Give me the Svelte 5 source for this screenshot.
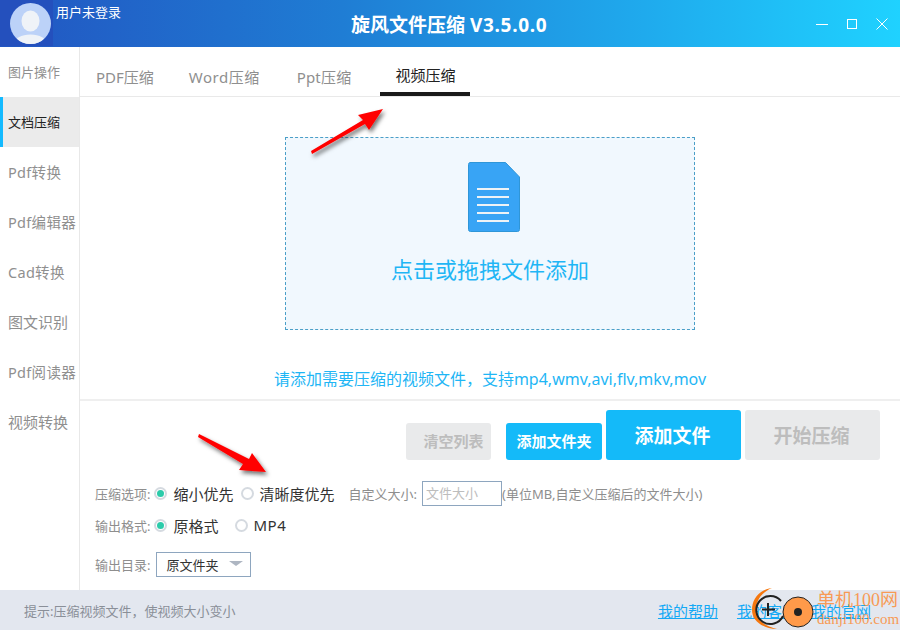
<script lang="ts">
    const navItems = [
        { label: "图片操作", size: "s" },
        { label: "文档压缩", size: "s" },
        { label: "Pdf转换", size: "m" },
        { label: "Pdf编辑器", size: "m" },
        { label: "Cad转换", size: "m" },
        { label: "图文识别", size: "l" },
        { label: "Pdf阅读器", size: "m" },
        { label: "视频转换", size: "l" },
    ];
    const tabs = ["PDF压缩", "Word压缩", "Ppt压缩", "视频压缩"];
    let activeNav = $state("文档压缩");
    let activeTab = $state("视频压缩");
    let quality = $state("small");
    let format = $state("origin");
</script>

<div class="window">
    <header class="titlebar">
        <div class="user">
            <div class="avatar-box">
                <svg class="avatar" viewBox="0 0 41 41" width="41" height="41">
                    <defs><clipPath id="round"><circle cx="20.5" cy="20.5" r="20.5" /></clipPath></defs>
                    <g clip-path="url(#round)">
                        <rect width="41" height="41" fill="#bcd2f8" />
                        <ellipse cx="20.5" cy="18" rx="9" ry="10.5" fill="#eff3f8" />
                        <ellipse cx="20.5" cy="41" rx="16.5" ry="9.5" fill="#eff3f8" />
                    </g>
                </svg>
            </div>
            <span class="user-name">用户未登录</span>
        </div>
        <h1 class="app-title">旋风文件压缩 <span class="version">V3.5.0.0</span></h1>
        <div class="win-controls">
            <svg width="12" height="12" viewBox="0 0 12 12"><path d="M0 6.5h12" stroke="#fff" stroke-width="1" /></svg>
            <svg width="12" height="12" viewBox="0 0 12 12"><rect x="1.5" y="1.500" width="9" height="9" fill="none" stroke="#fff" /></svg>
            <svg width="12" height="12" viewBox="0 0 12 12"><path d="M.5.5l11 11M11.5.5l-11 11" stroke="#fff" stroke-width="1" /></svg>
        </div>
    </header>

    <div class="body">
        <nav class="sidebar">
            {#each navItems as item}
                <button class="nav-item {item.size}" class:active={activeNav === item.label} onclick={() => (activeNav = item.label)}>{item.label}</button>
            {/each}
        </nav>

        <main class="content">
            <div class="tabs">
                {#each tabs as tab}
                    <button class="tab" class:active={activeTab === tab} onclick={() => (activeTab = tab)}>{tab}</button>
                {/each}
            </div>

            <section class="drop-area">
                <div class="drop-zone">
                    <svg class="doc-icon" width="52" height="70" viewBox="0 0 52 70">
                        <path d="M2 .5h35.500L51.500 15V67.500a2 2 0 0 1-2 2H2.500a2 2 0 0 1-2-2V2.500a2 2 0 0 1 1.500-2z" fill="#38a4f5" stroke="#2f96d8" />
                        <path d="M9 27h32M9 35h32M9 43h32M9 51h32M9 59h32" stroke="#eef3f6" stroke-width="2" />
                    </svg>
                    <p class="drop-text">点击或拖拽文件添加</p>
                </div>
                <p class="hint">请添加需要压缩的视频文件，支持mp4,wmv,avi,flv,mkv,mov</p>
            </section>

            <section class="panel">
                <div class="actions">
                    <button class="btn small disabled">清空列表</button>
                    <button class="btn small primary">添加文件夹</button>
                    <button class="btn large primary">添加文件</button>
                    <button class="btn large disabled">开始压缩</button>
                </div>

                <div class="option-row first">
                    <span class="label">压缩选项:</span>
                    <button class="radio" class:checked={quality === "small"} onclick={() => (quality = "small")}><i></i>缩小优先</button>
                    <button class="radio" class:checked={quality === "clear"} onclick={() => (quality = "clear")}><i></i>清晰度优先</button>
                    <span class="label custom">自定义大小:</span>
                    <input class="size-input" placeholder="文件大小" />
                    <span class="label">(单位MB,自定义压缩后的文件大小)</span>
                </div>
                <div class="option-row second">
                    <span class="label">输出格式:</span>
                    <button class="radio" class:checked={format === "origin"} onclick={() => (format = "origin")}><i></i>原格式</button>
                    <button class="radio mp4" class:checked={format === "mp4"} onclick={() => (format = "mp4")}><i></i>MP4</button>
                </div>
                <div class="option-row third">
                    <span class="label">输出目录:</span>
                    <div class="select">原文件夹<b></b></div>
                </div>
            </section>
        </main>
    </div>

    <footer class="statusbar">
        <span class="tip">提示:压缩视频文件，使视频大小变小</span>
        <div class="links">
            <a href="#help">我的帮助</a>
            <a href="#service">我的客服</a>
            <a href="#site">我的官网</a>
        </div>
    </footer>

    <!-- annotations lying over the screenshot -->
    <svg class="arrows" width="900" height="630" viewBox="0 0 900 630">
        <defs>
            <filter id="shade" x="-30%" y="-30%" width="170%" height="170%">
                <feDropShadow dx="2" dy="3" stdDeviation="2" flood-color="#000" flood-opacity="0.55" />
            </filter>
        </defs>
        <path d="M311 151l52-31-5-5 25-6-14 21-4-6-53 30z" fill="#f00" filter="url(#shade)" />
        <path d="M199 434l50 25 3-6 14 19-27-2 4-6-45-27z" fill="#f00" filter="url(#shade)" />
    </svg>

    <!-- site watermark -->
    <div class="watermark">
        <svg width="72" height="44" viewBox="0 0 72 44">
            <path d="M22 0C8 2 2 12 2 22c0 10 10 19 25 19C15 38 6 32 6 22 6 12 12 4 22 0z" fill="#f5770f" />
            <path d="M31 13A14 14 0 1 0 33 28" fill="none" stroke="#222" stroke-width="2" />
            <path d="M18 15v13M12 21.500h13" stroke="#222" stroke-width="2" />
            <circle cx="48" cy="24" r="15" fill="#ff9a4a" stroke="#222" stroke-width="1" />
            <circle cx="48" cy="24" r="4" fill="#222" />
        </svg>
        <div class="wm-text">
            <span class="wm-cn">单机100网</span>
            <span class="wm-en">danji100.com</span>
        </div>
    </div>
</div>

<style>
    :global(body) {
        margin: 0;
        background: #fff;
    }

    .window {
        position: relative;
        width: 900px;
        height: 630px;
        display: flex;
        flex-direction: column;
        overflow: hidden;
        font-family: "Noto Sans", "Noto Sans CJK SC", sans-serif;
        color: #333;
    }

    button {
        font-family: inherit;
        background: none;
        border: none;
        padding: 0;
        cursor: pointer;
    }

    .titlebar {
        height: 47px;
        flex: none;
        display: flex;
        align-items: center;
        background: linear-gradient(90deg, #2256c2 0%, #1f7dd4 38%, #1fa8ec 70%, #1fd2ff 100%);
    }

    .user {
        width: 190px;
        height: 47px;
        display: flex;
        flex: none;
    }

    .avatar-box {
        width: 53px;
        height: 46px;
        flex: none;
        background: #2450bd;
        padding: 3px 0 0 10px;
        box-sizing: border-box;
    }

    .user-name {
        margin: 3px 0 0 3px;
        font-size: 13px;
        line-height: 18px;
        color: #fff;
    }

    .app-title {
        margin: 0;
        flex: 1;
        padding-left: 161px;
        font-size: 19px;
        font-weight: 700;
        color: #fff;
    }

    .version {
        letter-spacing: 0.7px;
    }

    .win-controls {
        display: flex;
        gap: 18px;
        padding-right: 12px;
        align-items: center;
    }

    .win-controls svg {
        display: block;
    }

    .body {
        flex: 1;
        display: flex;
        min-height: 0;
    }

    .sidebar {
        width: 80px;
        flex: none;
        box-sizing: border-box;
        border-right: 1px solid #e8e8e8;
        display: flex;
        flex-direction: column;
    }

    .nav-item {
        height: 50px;
        flex: none;
        box-sizing: border-box;
        padding: 0 0 2px 8px;
        text-align: left;
        white-space: nowrap;
        color: #8f8f8f;
    }

    .nav-item.s {
        font-size: 13px;
    }

    .nav-item.m {
        font-size: 14.5px;
        letter-spacing: 0.3px;
    }

    .nav-item.l {
        font-size: 15px;
    }

    .nav-item.active {
        background: #ebebeb;
        color: #222;
        border-left: 3px solid #14baff;
        padding-left: 5px;
    }

    .content {
        flex: 1;
        min-width: 0;
        display: flex;
        flex-direction: column;
    }

    .tabs {
        height: 50px;
        flex: none;
        box-sizing: border-box;
        border-bottom: 1px solid #e9e9e9;
        display: flex;
        align-items: stretch;
        padding-left: 16px;
    }

    .tab {
        font-size: 15px;
        color: #8f8f8f;
        margin-right: 35px;
        padding-top: 9px;
        box-sizing: border-box;
        white-space: nowrap;
        height: 50px;
    }

    .tab:nth-child(2) {
        letter-spacing: 0.5px;
        margin-right: 37px;
    }

    .tab:nth-child(3) {
        letter-spacing: 0.2px;
    }

    .tab.active {
        color: #222;
        width: 90px;
        margin-left: -6px;
        margin-right: 0;
        border-bottom: 4px solid #1a1a1a;
        height: 49px;
    }

    .drop-area {
        height: 304px;
        flex: none;
        box-sizing: border-box;
        border-bottom: 2px solid #efefef;
        display: flex;
        flex-direction: column;
        align-items: center;
        padding-top: 40px;
    }

    .drop-zone {
        width: 410px;
        height: 193px;
        box-sizing: border-box;
        border: 1px dashed #4b9fc8;
        background: #f1f8fe;
        display: flex;
        flex-direction: column;
        align-items: center;
        padding-top: 24px;
        cursor: pointer;
    }

    .doc-icon {
        display: block;
        margin-left: 8px;
    }

    .drop-text {
        margin: 21px 0 0;
        font-size: 22px;
        line-height: 32px;
        color: #1fb6f5;
    }

    .hint {
        margin: 37px 0 0;
        font-size: 16px;
        line-height: 24px;
        color: #1fb6f5;
        white-space: nowrap;
    }

    .panel {
        flex: 1;
        display: flex;
        flex-direction: column;
        min-height: 0;
    }

    .actions {
        display: flex;
        justify-content: flex-end;
        align-items: flex-end;
        gap: 4px;
        padding: 9px 20px 0 0;
    }

    .btn {
        border-radius: 3px;
        font-weight: 700;
    }

    .btn.small {
        height: 37px;
        font-size: 15px;
        padding-bottom: 2px;
    }

    .btn.small.disabled {
        width: 85px;
        margin-right: 11px;
        padding-left: 10px;
    }

    .btn.small.primary {
        width: 96px;
    }

    .btn.large {
        width: 135px;
        height: 50px;
        font-size: 19px;
        padding-right: 2px;
    }

    .primary {
        background: #14baf9;
        color: #fff;
    }

    .disabled {
        background: #e9eaeb;
        color: #bdbdbd;
    }

    .option-row {
        display: flex;
        align-items: center;
        padding-left: 15px;
        white-space: nowrap;
    }

    .option-row.first {
        margin-top: 21px;
        height: 24px;
    }

    .option-row.second {
        margin-top: 8px;
        height: 24px;
    }

    .option-row.third {
        margin-top: 14px;
        height: 26px;
    }

    .label {
        font-size: 13px;
        color: #8e8e8e;
    }

    .label.custom {
        margin-left: 11px;
        margin-right: 5px;
    }

    .radio {
        display: flex;
        align-items: center;
        font-size: 15px;
        color: #333;
        margin-left: 4px;
        margin-right: 3px;
    }

    .radio.mp4 {
        margin-left: 13px;
        letter-spacing: 0.5px;
    }

    .radio i {
        width: 9px;
        height: 9px;
        margin-right: 6px;
        box-sizing: content-box;
        border: 2px solid #d5dae0;
        border-radius: 50%;
        background: #fff;
        display: block;
        position: relative;
    }

    .radio.checked i::after {
        content: "";
        position: absolute;
        left: 1px;
        top: 1px;
        width: 7px;
        height: 7px;
        border-radius: 50%;
        background: #2ccbaa;
    }

    .size-input {
        width: 80px;
        height: 25px;
        box-sizing: border-box;
        border: 1px solid #8ea6bf;
        padding: 0 3px;
        margin: 0;
        font-family: inherit;
        font-size: 13px;
        outline: none;
    }

    .size-input::placeholder {
        color: #bdbdbd;
    }

    .select {
        position: relative;
        width: 95px;
        height: 25px;
        margin-left: 6px;
        box-sizing: border-box;
        border: 1px solid #8ea6bf;
        padding-left: 9px;
        font-size: 13px;
        line-height: 25px;
        color: #333;
    }

    .select b {
        position: absolute;
        right: 7px;
        top: 8px;
        border-left: 7px solid transparent;
        border-right: 7px solid transparent;
        border-top: 5px solid #aeb6c2;
    }

    .statusbar {
        height: 40px;
        flex: none;
        background: #e3e7ef;
        display: flex;
        align-items: center;
        justify-content: space-between;
        padding: 0 29px 0 24px;
    }

    .tip {
        font-size: 13px;
        color: #8a8f98;
    }

    .links {
        display: flex;
        gap: 19px;
    }

    .links a {
        font-size: 15px;
        color: #14a9f5;
    }

    .links a:last-child {
        margin-left: -5px;
    }

    .arrows {
        position: absolute;
        left: 0;
        top: 0;
        pointer-events: none;
    }

    .watermark {
        position: absolute;
        left: 750px;
        top: 588px;
        display: flex;
        pointer-events: none;
    }

    .wm-text {
        display: flex;
        flex-direction: column;
        margin-left: -5px;
        color: #f79a55;
        font-family: "Liberation Serif", "Noto Sans CJK SC", serif;
        white-space: nowrap;
    }

    .wm-cn {
        font-size: 18px;
        line-height: 20px;
        margin-top: 2px;
    }

    .wm-en {
        font-size: 15px;
        line-height: 16px;
        margin-top: 1px;
    }
</style>
